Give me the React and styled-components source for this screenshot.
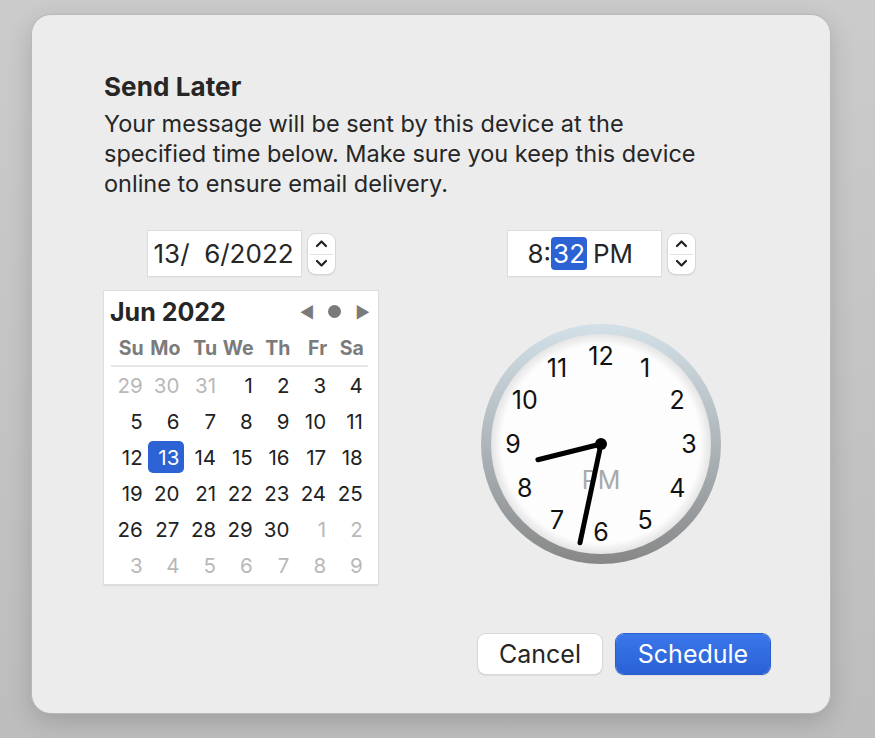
import React from 'react';
import styled, {createGlobalStyle} from 'styled-components';

const Global = createGlobalStyle`
  html, body {
    margin: 0;
    padding: 0;
  }
  body {
    background: linear-gradient(180deg, #cbcbcb 0%, #bdbdbd 100%);
    font-family: Inter, "Noto Sans", "Liberation Sans", sans-serif;
    color: #262626;
    height: 738px;
    overflow: hidden;
  }
`;

const Page = styled.div`
  padding: 14px 0 0 31px;
`;

const Dialog = styled.div`
  box-sizing: border-box;
  width: 800px;
  height: 700px;
  background: #ececec;
  border-radius: 20px;
  border: 1px solid #b8b8b8;
  box-shadow: 0 8px 24px rgba(0, 0, 0, 0.16);
  padding: 57px 60px 0 72px;
  display: flex;
  flex-direction: column;
`;

const Title = styled.h1`
  margin: 0;
  font-size: 26px;
  line-height: 30px;
  font-weight: 700;
  letter-spacing: 0.1px;
`;

const Message = styled.p`
  margin: 7px 0 0;
  font-size: 23.5px;
  line-height: 30px;
  width: 615px;
`;

const Pickers = styled.div`
  display: flex;
  margin-top: 32px;
`;

const Column = styled.div`
  display: flex;
  flex-direction: column;
  align-items: center;
  width: ${p => p.$width}px;
  margin-left: ${p => p.$offset || 0}px;
`;

const FieldRow = styled.div`
  display: flex;
  align-items: center;
  gap: 7px;
`;

const Field = styled.div`
  box-sizing: border-box;
  width: 153px;
  height: 45px;
  background: #fff;
  box-shadow: 0 0 0 1px #dcdcdc, 0 1px 1px rgba(0, 0, 0, 0.18);
  display: flex;
  align-items: center;
  padding-left: ${p => p.$pad}px;
  font-size: 26px;
  white-space: pre;
`;

const Selected = styled.span`
  background: #2c62d4;
  color: #fff;
  border-radius: 4px;
  padding: 1px 2px;
  margin-right: 6px;
`;

const Stepper = styled.div`
  width: 27px;
  height: 40px;
  background: #fff;
  border-radius: 8px;
  box-shadow: 0 0 0 1px #d6d6d6, 0 1px 2px rgba(0, 0, 0, 0.2);
  display: flex;
  flex-direction: column;
  position: relative;
  &::after {
    content: '';
    position: absolute;
    left: 2px;
    right: 2px;
    top: 20px;
    height: 1px;
    background: #e2e2e2;
  }
`;

const StepHalf = styled.div`
  flex: 1;
  display: flex;
  align-items: center;
  justify-content: center;
`;

const Calendar = styled.div`
  margin-top: 15px;
  box-sizing: border-box;
  width: 274px;
  height: 293px;
  background: #fff;
  box-shadow: 0 0 0 1px #dedede, 0 1px 2px rgba(0, 0, 0, 0.2);
  padding: 2px 5px 0 6px;
`;

const CalHeader = styled.div`
  display: flex;
  align-items: center;
  height: 37px;
`;

const Month = styled.div`
  font-size: 25px;
  font-weight: 700;
  flex: 1;
`;

const Nav = styled.div`
  display: flex;
  align-items: center;
  gap: 14px;
  color: #7a7a7a;
  font-size: 16px;
  padding-right: 3px;
`;

const Dot = styled.span`
  width: 13px;
  height: 13px;
  border-radius: 50%;
  background: #7a7a7a;
`;

const Grid = styled.div`
  display: grid;
  grid-template-columns: repeat(7, 36.7px);
  padding-left: 1px;
`;

const WeekDay = styled.div`
  height: 35px;
  display: flex;
  align-items: center;
  justify-content: flex-end;
  padding-right: 4px;
  font-size: 19.5px;
  font-weight: 700;
  color: #7b7b7b;
  border-bottom: 2px solid #e6e6e6;
`;

const Day = styled.div`
  box-sizing: border-box;
  height: ${p => (p.$selected ? 32 : 36)}px;
  margin: ${p => (p.$selected ? '2px 0' : '0')};
  display: flex;
  align-items: center;
  justify-content: flex-end;
  padding-right: 5px;
  font-size: 20.5px;
  color: ${p => (p.$selected ? '#fff' : p.$muted ? '#b8b8b8' : '#222')};
  background: ${p => (p.$selected ? '#2c62d4' : 'transparent')};
  border-radius: 5px;
`;

const Clock = styled.svg`
  margin-top: 46px;
  display: block;
`;

const Footer = styled.div`
  margin-top: auto;
  margin-bottom: 39px;
  display: flex;
  justify-content: flex-end;
  gap: 14px;
`;

const Button = styled.button`
  height: 40px;
  border-radius: 8px;
  border: none;
  font-family: inherit;
  font-size: 25px;
  padding: 0;
  width: ${p => p.$width}px;
  color: ${p => (p.$primary ? '#fff' : '#262626')};
  background: ${p => (p.$primary ? 'linear-gradient(180deg, #3a77ea 0%, #2a62d6 100%)' : '#fff')};
  box-shadow: ${p => (p.$primary
    ? '0 0 0 1px #2a5fcf, 0 1px 2px rgba(0,0,0,0.2)'
    : '0 0 0 1px #d8d8d8, 0 1px 2px rgba(0,0,0,0.22)')};
`;

function Chevron({up}) {
  return (
    <svg width="13" height="9" viewBox="0 0 13 9">
      <path d={up ? 'M2 7 L6.5 2.5 L11 7' : 'M2 2 L6.5 6.5 L11 2'} fill="none" stroke="#222" strokeWidth="2.2" strokeLinecap="round" strokeLinejoin="round" />
    </svg>
  );
}

function StepButtons() {
  return (
    <Stepper>
      <StepHalf><Chevron up /></StepHalf>
      <StepHalf><Chevron /></StepHalf>
    </Stepper>
  );
}

const weekDays = ['Su', 'Mo', 'Tu', 'We', 'Th', 'Fr', 'Sa'];

function buildDays() {
  const days = [29, 30, 31].map(n => ({n, muted: true}));
  for (let i = 1; i <= 30; i++) days.push({n: i, selected: i === 13});
  [1, 2, 3, 4, 5, 6, 7, 8, 9].forEach(n => days.push({n, muted: true}));
  return days;
}

function ClockFace() {
  const cx = 122, cy = 122;
  const nums = [];
  for (let h = 1; h <= 12; h++) {
    const a = (h * 30 * Math.PI) / 180;
    const r = 88;
    nums.push(
      <text key={h} x={cx + Math.sin(a) * r} y={cy - Math.cos(a) * r} textAnchor="middle" dominantBaseline="central"
        fontSize="25" fill="#111" fontFamily="Inter, 'Noto Sans', sans-serif">{h}</text>
    );
  }
  const hand = (deg, len) => {
    const a = (deg * Math.PI) / 180;
    return [cx + Math.sin(a) * len, cy - Math.cos(a) * len];
  };
  const [hx, hy] = hand(256, 65);
  const [mx, my] = hand(192, 101);
  return (
    <Clock width="244" height="244" viewBox="0 0 244 244">
      <defs>
        <linearGradient id="rim" x1="0" y1="0" x2="0" y2="1">
          <stop offset="0" stopColor="#d3e0e8" />
          <stop offset="0.5" stopColor="#aeb6ba" />
          <stop offset="1" stopColor="#878787" />
        </linearGradient>
        <radialGradient id="face" cx="0.5" cy="0.5" r="0.5">
          <stop offset="0.9" stopColor="#fdfdfd" />
          <stop offset="1" stopColor="#e4e4e4" />
        </radialGradient>
      </defs>
      <circle cx={cx} cy={cy} r="120" fill="url(#rim)" />
      <circle cx={cx} cy={cy} r="110" fill="url(#face)" />
      {nums}
      <text x={cx} y={cy + 36} textAnchor="middle" dominantBaseline="central" fontSize="25" fill="#a9a9a9"
        fontFamily="Inter, 'Noto Sans', sans-serif">PM</text>
      <line x1={cx} y1={cy} x2={hx} y2={hy} stroke="#000" strokeWidth="5" strokeLinecap="round" />
      <line x1={cx} y1={cy} x2={mx} y2={my} stroke="#000" strokeWidth="5" strokeLinecap="round" />
      <circle cx={cx} cy={cy} r="6" fill="#000" />
    </Clock>
  );
}

export default function App() {
  const days = buildDays();
  return (
    <Page>
      <Global />
      <Dialog>
        <Title>Send Later</Title>
        <Message>
          Your message will be sent by this device at the specified time below. Make sure you keep this device online to ensure email delivery.
        </Message>

        <Pickers>
          <Column $width={274}>
            <FieldRow>
              <Field $pad={6}>{'13/  6/2022'}</Field>
              <StepButtons />
            </FieldRow>
            <Calendar>
              <CalHeader>
                <Month>Jun 2022</Month>
                <Nav>
                  <span>◀</span>
                  <Dot />
                  <span>▶</span>
                </Nav>
              </CalHeader>
              <Grid>
                {weekDays.map(d => <WeekDay key={d}>{d}</WeekDay>)}
                {days.map((d, i) => (
                  <Day key={i} $muted={d.muted} $selected={d.selected}>{d.n}</Day>
                ))}
              </Grid>
            </Calendar>
          </Column>

          <Column $width={244} $offset={101}>
            <FieldRow>
              <Field $pad={20}>8:<Selected>32</Selected>PM</Field>
              <StepButtons />
            </FieldRow>
            <ClockFace />
          </Column>
        </Pickers>

        <Footer>
          <Button $width={124}>Cancel</Button>
          <Button $primary $width={154}>Schedule</Button>
        </Footer>
      </Dialog>
    </Page>
  );
}
